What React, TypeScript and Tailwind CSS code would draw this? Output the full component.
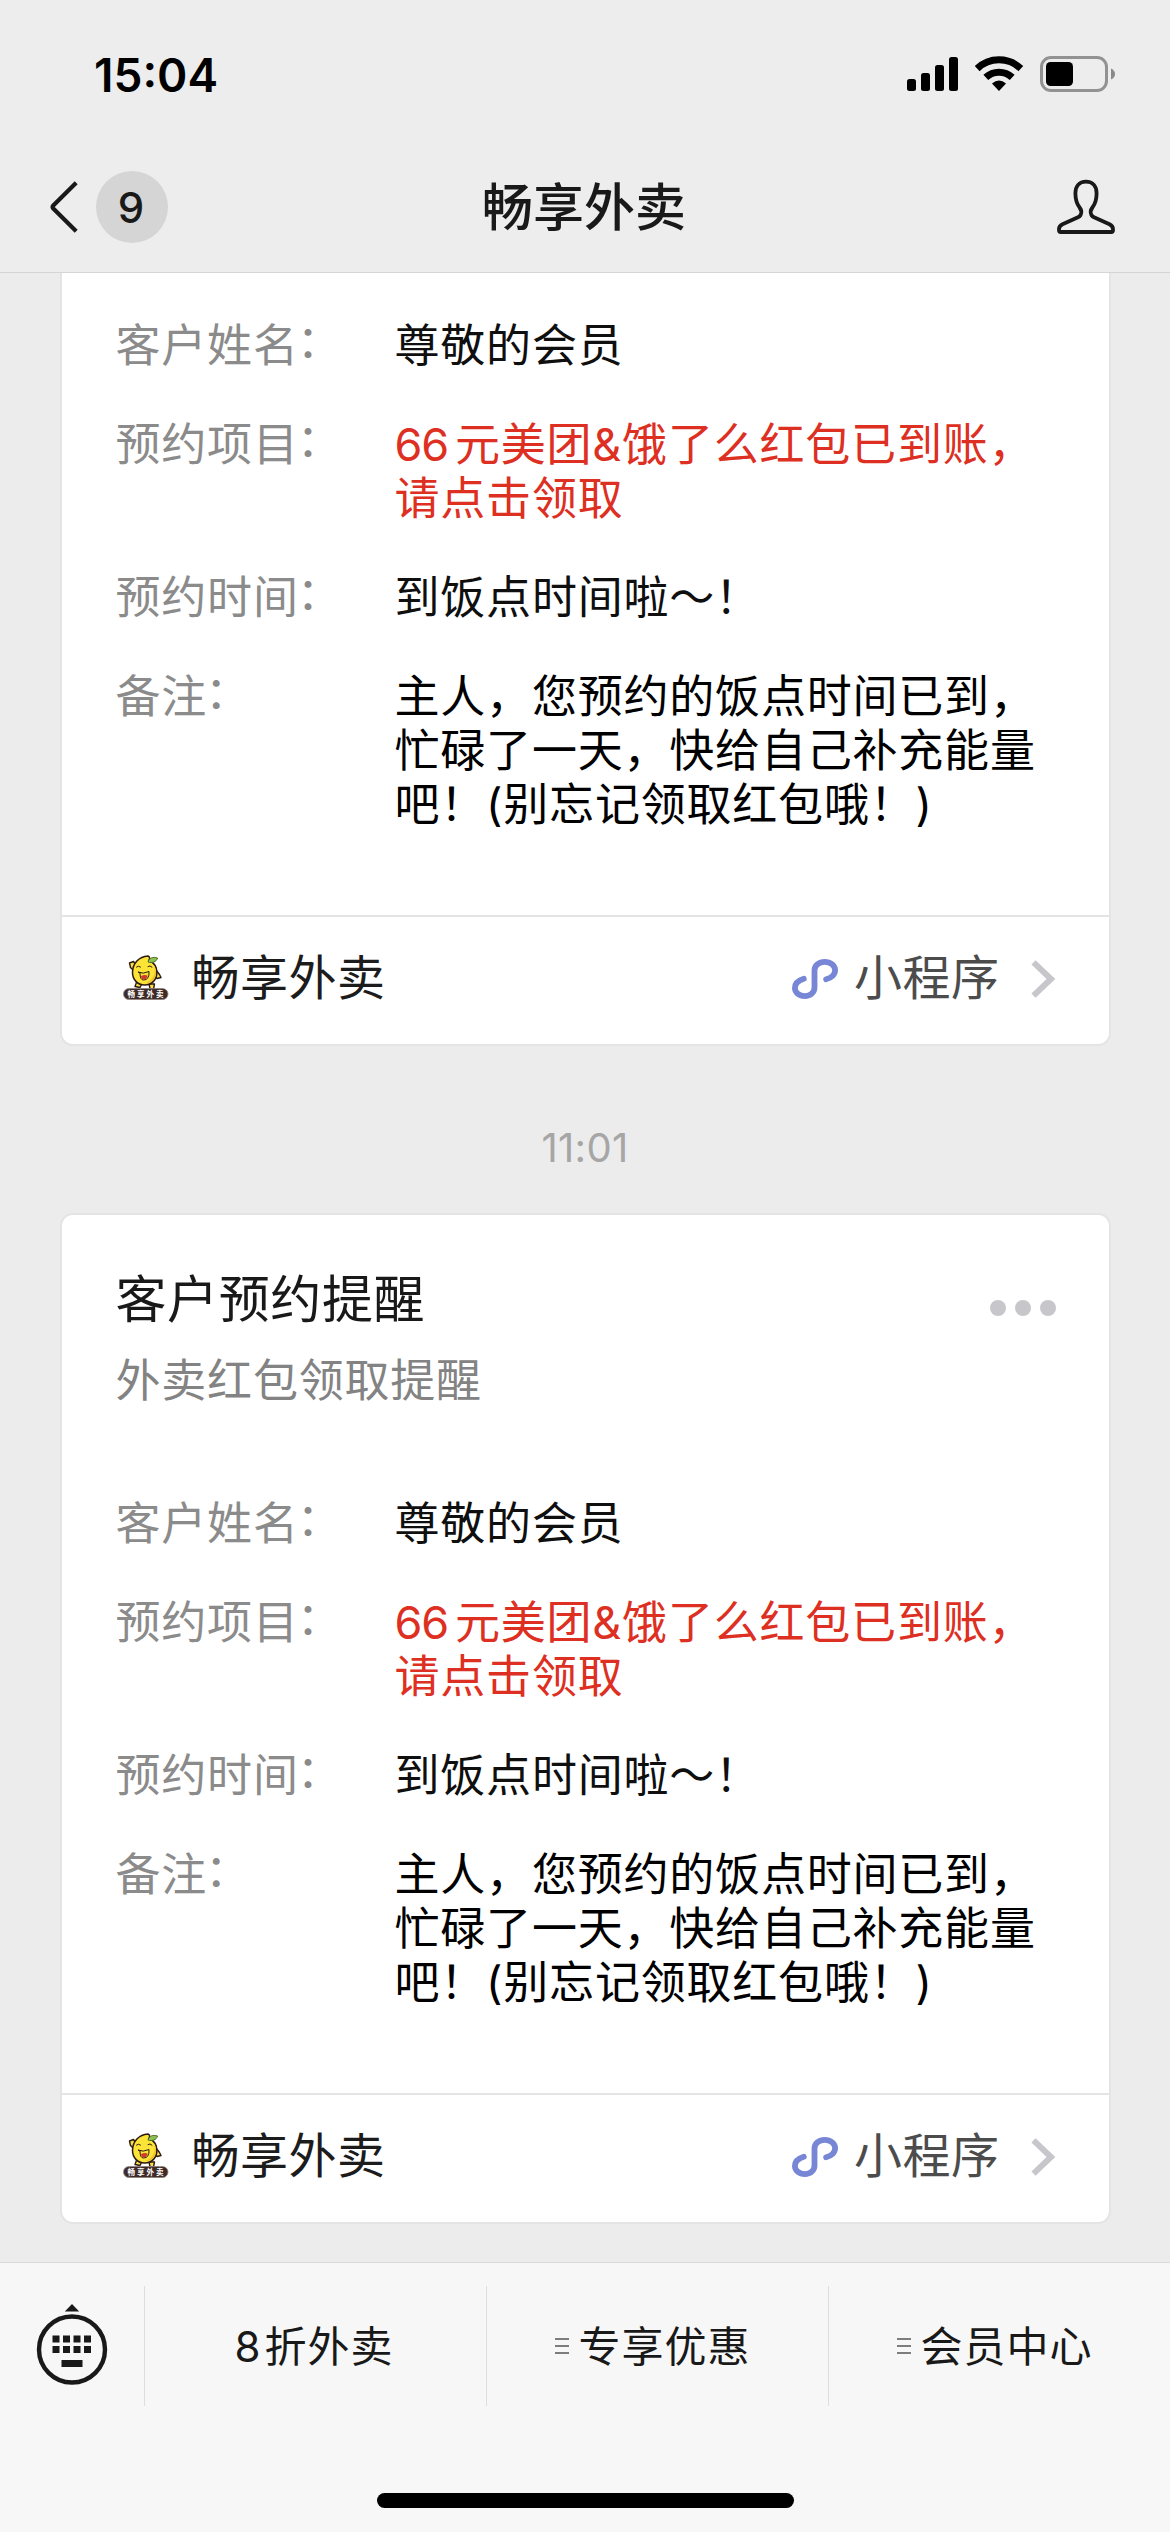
import type { ReactNode } from "react";

type Field = {
  label: string;
  lines: ReactNode[];
  color: string;
};

const fields: Field[] = [
  { label: "客户姓名", lines: ["尊敬的会员"], color: "text-[#0f0f0f]" },
  {
    label: "预约项目",
    lines: [
      <>
        <span className="mr-[7px] tracking-[-1.2px]">66</span>元美团&饿了么红包已到账，
      </>,
      "请点击领取",
    ],
    color: "text-[#dd2f22]",
  },
  { label: "预约时间", lines: ["到饭点时间啦～！"], color: "text-[#0f0f0f]" },
  {
    label: "备注",
    lines: [
      "主人，您预约的饭点时间已到，",
      "忙碌了一天，快给自己补充能量",
      "吧！(别忘记领取红包哦！)",
    ],
    color: "text-black",
  },
];

const StatusIcons = () => (
  <svg width="210" height="38" viewBox="906 55 210 38" className="mt-[55px]">
    {/* Signal */}
    <rect x="907" y="79" width="9" height="12" rx="2.5" />
    <rect x="921" y="73" width="9" height="18" rx="2.5" />
    <rect x="935" y="65" width="9" height="26" rx="2.5" />
    <rect x="949" y="57" width="9" height="34" rx="2.5" />
    {/* Wifi */}
    <g fill="none" stroke="#000" strokeWidth="7">
      <path d="M977.2 68.6a31.5 31.5 0 0 1 43.6 0" />
      <path d="M985.8 77.4a19.2 19.2 0 0 1 26.4 0" />
    </g>
    <path d="M999 91l-7-7.4q7-6 14 0z" />
    {/* Battery */}
    <rect x="1041.5" y="57.5" width="65" height="33" rx="9.5" fill="none" stroke="#929292" strokeWidth="3" />
    <rect x="1046" y="62" width="27" height="24" rx="4.5" />
    <path d="M1111 68.5q4 2 4 5.5t-4 5.5z" fill="#8a8a8a" />
  </svg>
);

const BackIcon = () => (
  <svg width="28" height="52" viewBox="0 0 28 52" fill="none" stroke="#191919" strokeWidth="4.2">
    <path d="M26.2 1.8L3.3 24.4q-1.4 1.6 0 3.2L26.2 50.2" />
  </svg>
);

const PersonIcon = () => (
  <svg width="60" height="56" viewBox="0 0 60 56" fill="none" stroke="#191919" strokeWidth="3.8">
    <path
      d="M30 2.7c-7 0-10.6 5-10.6 11.5 0 6.3.8 9.8 4.2 14.3 2.2 2.9 2 5.5 1 7.5-.6 1.1-1.6 1.7-2.6 2.2L6.5 45.3c-2.6 1.3-3.5 2.7-3.5 5v1c0 1 .6 1.7 1.7 1.7h50.6c1.1 0 1.7-.7 1.7-1.7v-1c0-2.3-.9-3.7-3.5-5L38 38.2c-1-.5-2-1.1-2.6-2.2-1-2-1.2-4.6 1-7.5 3.4-4.5 4.2-8 4.2-14.3C40.6 7.7 37 2.7 30 2.7z"
      strokeLinejoin="round"
    />
  </svg>
);

const Mascot = () => (
  <svg width="48" height="48" viewBox="0 0 48 48" className="-mt-[3px]">
    {/* Arms and feet */}
    <g fill="#f8e04a" stroke="#2c1a10" strokeWidth="1.4" strokeLinejoin="round">
      <path d="M13 18L8.5 13.5 7.5 9l4-1.5 3 4.5z" />
      <path d="M34 16l3.5 4.5 1.5 3-4 1-2.5-3z" />
      <path d="M15 27l-2 5.5 5 1 2-4z" />
      <path d="M27 30l1 4.500 3.500.5 1-5z" />
    </g>
    <path
      d="M26 2c2 .8 2 2.5.9 4.2 5 2.3 8 6.8 8 12.3 0 7-5 12.5-12.2 12.5S10.5 25.500 10.500 18.500C10.500 9.500 17 2.500 26 2z"
      fill="#fbe437"
      stroke="#2c1a10"
      strokeWidth="1.5"
    />
    <path d="M32.5 13c1.5 7-2 14.5-9.5 16 7 .5 11-4.5 11-10.5 0-2-.5-4-1.500-5.500z" fill="#efc02c" />
    <path d="M26 8c1-4 5-5.500 9.500-4-1 4-5.500 5.500-9.500 4z" fill="#8cc152" stroke="#4a6b1e" strokeWidth="1" />
    <g fill="none" stroke="#2c1a10" strokeWidth="1" strokeLinecap="round">
      <path d="M14.500 13q1.800-1.800 4 0M26 12.500q2-1.600 4 .6" />
    </g>
    <path d="M16 18q5 2.500 11-.5.5 8.500-5.500 8.500Q18 26 18 19z" fill="#fbe437" stroke="#2c1a10" strokeWidth="1" />
    <path d="M19 22q3.500-1.500 6.500-.5-.5 4-4 4-2 0-2.500-3.500z" fill="#d23a2c" />
    <rect x="1.5" y="34.5" width="44.5" height="11" rx="5.5" fill="#3e2a27" stroke="#8f8380" strokeWidth=".8" />
    <text x="24.5" y="42.8" textAnchor="middle" fontSize="7.5" fontWeight="700" letterSpacing="2" fill="#fff">
      畅享外卖
    </text>
  </svg>
);

const MiniProgramIcon = () => (
  <svg
    width="46"
    height="40"
    viewBox="0 0 46 40"
    fill="none"
    stroke="#7886d6"
    strokeWidth="5.8"
    strokeLinecap="round"
    className="-mt-[2px]"
  >
    <path d="M11.8 19.8C6.5 21.4 2.9 24.8 2.9 29c0 4.5 4.3 8.1 10 8.1 5.5 0 9.6-3.6 9.6-8.6V11.5c0-5 4.5-8.6 10.2-8.6 5.8 0 10.4 3.7 10.4 8.4 0 4.3-3.8 7.7-9 9" />
  </svg>
);

const ChevronIcon = () => (
  <svg
    width="25"
    height="38"
    viewBox="0 0 25 38"
    fill="none"
    stroke="#c7c7cb"
    strokeWidth="6"
    className="-mt-[2px]"
  >
    <path d="M2.5 2.3L20 19 2.5 35.7" />
  </svg>
);

const KeyboardIcon = () => (
  <svg width="72" height="82" viewBox="0 0 72 82" fill="#191919" className="-mt-[2px]">
    <path d="M36 0l7.2 7.5H28.8z" />
    <circle cx="36" cy="45.5" r="33" fill="none" stroke="#191919" strokeWidth="4.4" />
    {[16.5, 27, 37.5, 48].map((x) => (
      <g key={x}>
        <rect x={x} y="31.5" width="7" height="7" />
        <rect x={x} y="42" width="7" height="7" />
      </g>
    ))}
    <rect x="25.5" y="56" width="21" height="7" />
  </svg>
);

const MenuIcon = () => (
  <svg width="14" height="16" viewBox="0 0 14 16" fill="#7d7d7d">
    <rect width="14" height="2" />
    <rect y="7" width="14" height="2" />
    <rect y="14" width="14" height="2" />
  </svg>
);

const FieldList = () => (
  <div className="flex flex-col gap-[45px] pb-[83px] text-[45px] leading-[54px] tracking-[0.8px]">
    {fields.map((field) => (
      <div key={field.label} className="flex">
        <div className="flex w-[279px] shrink-0 text-[#8b8b8b]">
          {field.label}
          <span className="-ml-[2px] -translate-y-[4px]">：</span>
        </div>
        <div className={field.color}>
          {field.lines.map((line, i) => (
            <p key={i} className="whitespace-nowrap">
              {line}
            </p>
          ))}
        </div>
      </div>
    ))}
  </div>
);

const CardFooter = () => (
  <div className="flex h-[129px] items-center border-t-2 border-[#e4e4e4] pr-[53px] pb-[2px] pl-[60px] text-[48px] tracking-[0.5px]">
    <Mascot />
    <span className="-mt-[3px] ml-[22px] text-[#1c1c1c]">畅享外卖</span>
    <span className="ml-auto flex items-center text-[#4c4c4c]">
      <MiniProgramIcon />
      <span className="-mt-[3px] mr-[31px] ml-[16px]">小程序</span>
      <ChevronIcon />
    </span>
  </div>
);

const Tab = ({ children, menu }: { children: ReactNode; menu?: boolean }) => (
  <div className="flex h-[120px] w-[342px] items-center justify-center border-l border-[#dedede] text-[42px] tracking-[1px] text-[#191919]">
    {menu && <MenuIcon />}
    <span className={menu ? "mr-[9px] ml-[9px]" : "mr-[3px]"}>{children}</span>
  </div>
);

export default function App() {
  return (
    <div
      lang="zh-CN"
      className="flex h-[2532px] w-[1170px] flex-col overflow-hidden bg-[#ececec] font-[Inter,'Noto_Sans_CJK_SC',sans-serif]"
    >
      <header className="h-[273px] shrink-0 border-b border-[#d5d5d5] bg-[#ededed]">
        <div className="flex h-[141px] items-start justify-between pr-[54px] pl-[94px]">
          <span className="mt-[47px] text-[46px] leading-[56px] font-semibold text-black">15:04</span>
          <StatusIcons />
        </div>
        <div className="grid h-[132px] grid-cols-3 items-center pr-[54px] pl-[50px]">
          <div className="flex items-center gap-[18px]">
            <BackIcon />
            <span className="flex h-[72px] w-[72px] items-center justify-center rounded-full bg-[#d5d5d5] pr-[2px] text-[42px] font-medium text-[#191919]">
              9
            </span>
          </div>
          <h1 className="pt-[3px] pl-[2px] text-center text-[51px] font-medium text-[#191919]">畅享外卖</h1>
          <div className="flex justify-end">
            <PersonIcon />
          </div>
        </div>
      </header>

      <main className="flex h-[1989px] shrink-0 flex-col items-center">
        <section className="w-[1051px] rounded-b-[13px] border-2 border-t-0 border-[#e4e4e4] bg-white">
          <div className="pt-[46px] pl-[54px]">
            <FieldList />
          </div>
          <CardFooter />
        </section>

        <div className="flex h-[167px] items-center pt-[37px] text-[40px] tracking-[0.3px] text-[#a6a6a6]">11:01</div>

        <section className="w-[1051px] rounded-[13px] border-2 border-[#e4e4e4] bg-white">
          <div className="pt-[55px] pl-[54px]">
            <div className="flex items-center justify-between pr-[53px]">
              <h2 className="text-[51px] leading-[60px] tracking-[0.6px] text-[#191919]">客户预约提醒</h2>
              <div className="mt-[15px] flex gap-[9px]">
                <i className="h-[16px] w-[16px] rounded-full bg-[#c7c7cb]" />
                <i className="h-[16px] w-[16px] rounded-full bg-[#c7c7cb]" />
                <i className="h-[16px] w-[16px] rounded-full bg-[#c7c7cb]" />
              </div>
            </div>
            <p className="mt-[24px] mb-[89px] text-[45px] leading-[54px] tracking-[0.8px] text-[#838383]">
              外卖红包领取提醒
            </p>
            <FieldList />
          </div>
          <CardFooter />
        </section>
      </main>

      <footer className="flex h-[270px] shrink-0 flex-col items-center border-t border-[#dadada] bg-[#f7f7f7]">
        <div className="flex w-full pt-[23px]">
          <div className="flex h-[120px] w-[144px] items-center justify-center">
            <KeyboardIcon />
          </div>
          <Tab>
            <span className="mr-[3px]">8</span>折外卖
          </Tab>
          <Tab menu>专享优惠</Tab>
          <Tab menu>会员中心</Tab>
        </div>
        <div className="mt-[87px] h-[15px] w-[417px] rounded-full bg-black" />
      </footer>
    </div>
  );
}
